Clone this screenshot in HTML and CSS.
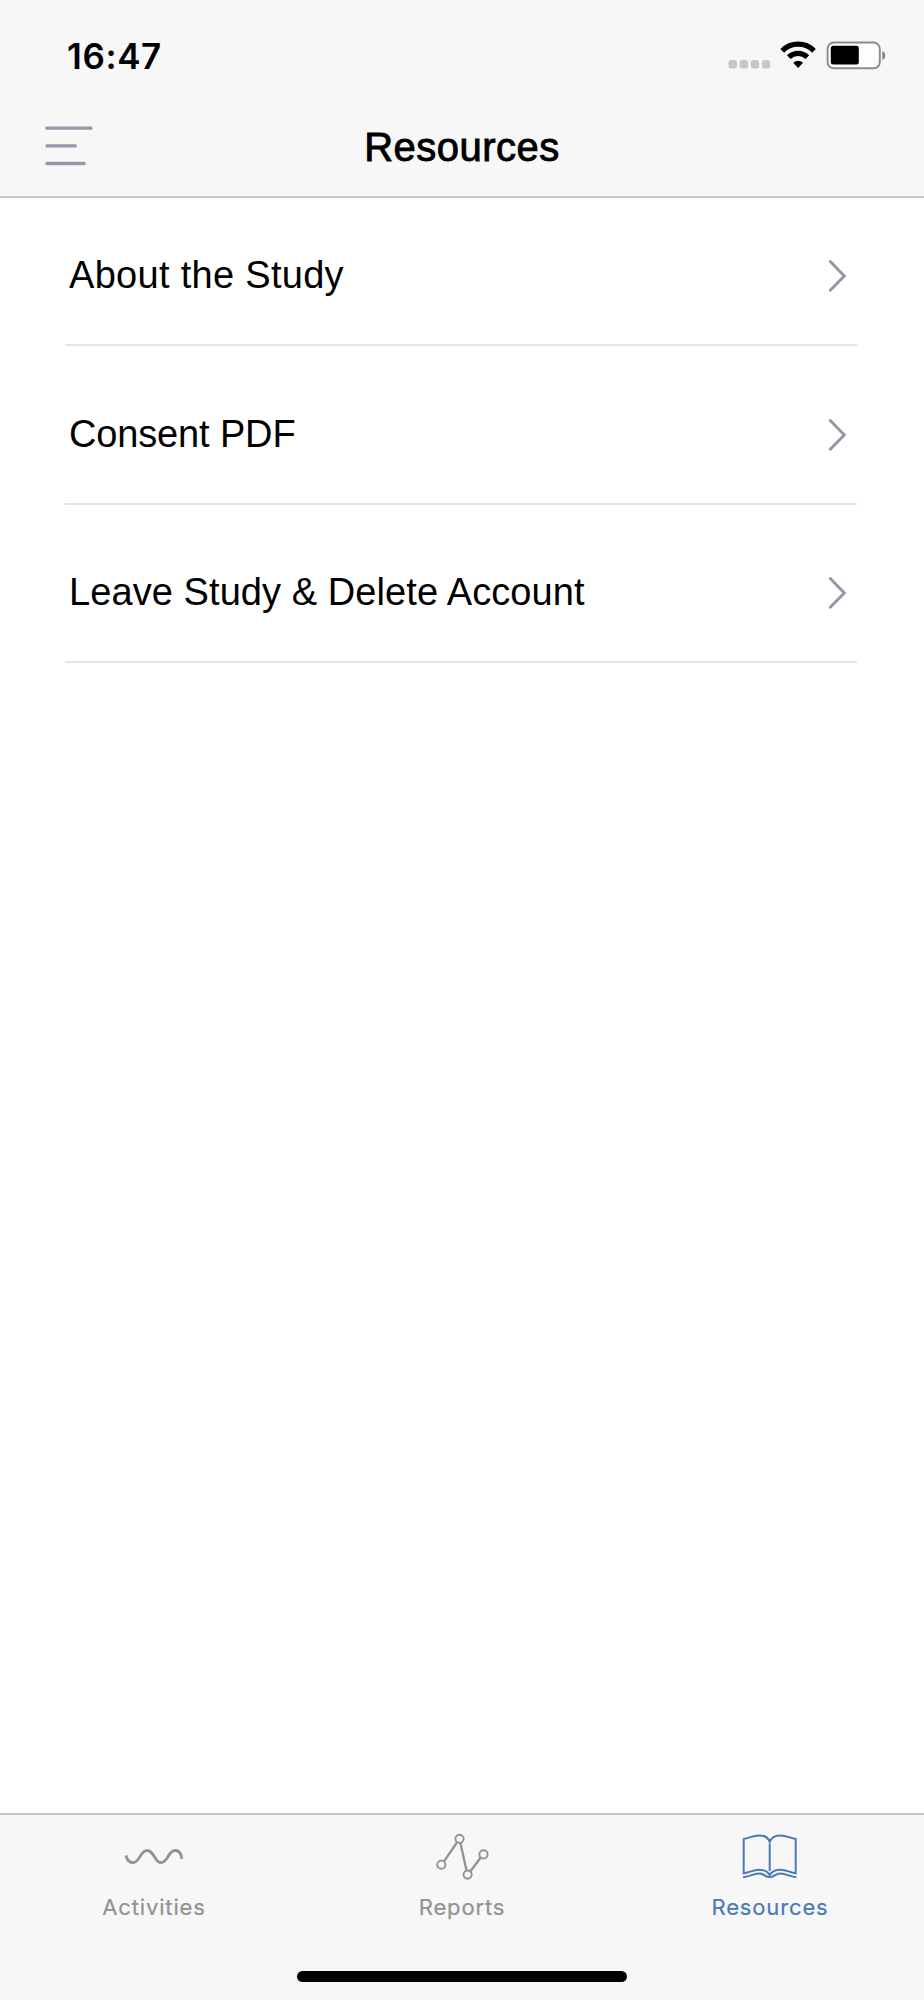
FILE: index.html
```html
<!DOCTYPE html>
<html lang="en">
<head>
<meta charset="utf-8">
<title>Resources</title>
<link rel="stylesheet" href="styles.css">
</head>
<body>
<div class="screen">
  <header class="header">
    <div class="status">
      <span class="time">16:47</span>
      <svg class="status-icons" width="160" height="32" viewBox="0 0 160 32">
        <g fill="#c6c6c6">
          <rect x="0.500" y="20" width="8.5" height="8.5" rx="3"/>
          <rect x="11.6" y="20" width="8.5" height="8.5" rx="3"/>
          <rect x="22.7" y="20" width="8.5" height="8.5" rx="3"/>
          <rect x="33.8" y="20" width="8.5" height="8.5" rx="3"/>
        </g>
        <g fill="none" stroke="#000" stroke-width="5.2">
          <path d="M54.2 10.8a22.5 22.5 0 0 1 31.8 0"/>
          <path d="M60.8 17.2a13.3 13.3 0 0 1 18.6 0"/>
        </g>
        <path d="M65.2 22.7a7 7 0 0 1 9.8 0L70.1 28z"/>
        <rect x="99.6" y="2.5" width="52.2" height="25.8" rx="6.2" fill="#fdfdfd" stroke="#8b8b8b" stroke-width="1.9"/>
        <rect x="102.8" y="5.8" width="28" height="18.8" rx="2.5"/>
        <path d="M154.3 11c4 1.300 4 7.700 0 9z" fill="#858585"/>
      </svg>
    </div>
    <div class="nav">
      <svg class="menu" width="52" height="44" viewBox="0 0 52 44" fill="none" stroke="#9697ad" stroke-width="3.300" stroke-linecap="round">
        <path d="M2.900 4.200H47M2.900 21.900H31.300M2.900 39.500H40.200"/>
      </svg>
      <h1 class="title">Resources</h1>
    </div>
  </header>
  <main class="list">
    <div class="row"><span class="label label-about">About the Study</span><svg class="chevron" width="20" height="34" viewBox="0 0 20 34"><path d="M2.300 2.600L16.300 17L2.300 31.200"/></svg></div>
    <div class="row"><span class="label label-consent">Consent PDF</span><svg class="chevron" width="20" height="34" viewBox="0 0 20 34"><path d="M2.300 2.600L16.300 17L2.300 31.200"/></svg></div>
    <div class="row"><span class="label label-leave">Leave Study &amp; Delete Account</span><svg class="chevron" width="20" height="34" viewBox="0 0 20 34"><path d="M2.300 2.600L16.300 17L2.300 31.200"/></svg></div>
  </main>
  <footer class="footer">
    <nav class="tabs">
      <div class="tab">
        <svg width="60" height="50" viewBox="0.500 0 60 50" fill="none" stroke="#929292" stroke-width="2.800">
          <path d="M2.300 25.500C3.500 29.500 5.500 32.700 9.500 32.700C16.500 32.700 16.500 20.500 23.700 20.500C30.900 20.500 30.900 32.700 37.600 32.700C44.500 32.700 44.500 20.500 51.500 20.500C56 20.500 58 24.500 58.300 28.800"/>
        </svg>
        <span>Activities</span>
      </div>
      <div class="tab">
        <svg width="60" height="50" viewBox="0 0 60 50" fill="none" stroke="#929292">
          <path stroke-width="2.300" d="M12 31.300L25.300 12M28.400 12.700L34.600 40.900M38.300 41.500L48.500 27.700"/>
          <g stroke-width="1.900"><circle cx="9.300" cy="34.700" r="4.100"/><circle cx="27.500" cy="8.800" r="4.100"/><circle cx="35.600" cy="44.600" r="4.100"/><circle cx="51.500" cy="24.400" r="4.100"/></g>
        </svg>
        <span>Reports</span>
      </div>
      <div class="tab active">
        <svg width="60" height="50" viewBox="0.800 0 60 50" fill="none" stroke="#4a7ab8" stroke-width="2">
          <path d="M30.500 12C29 7.500 25 5.400 20 5.400C14 5.400 10 8 4.500 9.100V43.300C10 42.500 14 39.700 20 39.700C25 39.700 28.500 41.500 30.500 45C32.500 41.500 36 39.700 41 39.700C47 39.700 51 42.500 56.500 43.300V9.100C51 8 47 5.400 41 5.400C36 5.400 32 7.500 30.500 12Z"/>
          <path d="M30.500 14V41M3.800 47.300C10 46.800 14 43.600 20 43.600C24.500 43.600 25.500 46.300 28.300 46.700Q30.500 47.100 32.700 46.700C35.500 46.300 36.500 43.600 41 43.600C47 43.600 51 46.800 57.200 47.300"/>
        </svg>
        <span>Resources</span>
      </div>
    </nav>
    <div class="home-bar"></div>
  </footer>
</div>
</body>
</html>
```
FILE: styles.css
```css
* { box-sizing: border-box; }

body {
  margin: 0;
  background: #fff;
  color: #000;
  font-family: "Liberation Sans", Arial, sans-serif;
}

.screen {
  width: 924px;
  height: 2000px;
  display: flex;
  flex-direction: column;
}

.header {
  height: 198px;
  background: #f7f7f7;
  border-bottom: 2px solid #c8c8c8;
}

.status {
  height: 110px;
  display: flex;
  justify-content: space-between;
  align-items: flex-start;
  padding: 35px 36px 0 67px;
}

.time {
  font: 600 35px/42px Inter, sans-serif;
  letter-spacing: 0.6px;
}

.status-icons { margin-top: 5px; }

.nav {
  display: grid;
  grid-template-columns: 150px 1fr 150px;
  align-items: start;
}

.menu { margin: 14px 0 0 44px; }

.title {
  margin: 12px 0 0;
  text-align: center;
  font-size: 40px;
  font-weight: 400;
  line-height: 50px;
  letter-spacing: 0.5px;
  -webkit-text-stroke: 0.9px #000;
}

.list {
  flex: 1;
  padding: 29px 67px 0 65px;
}

.row {
  height: 158.5px;
  padding: 39.5px 10px 19px 4px;
  display: flex;
  justify-content: space-between;
  align-items: center;
  border-bottom: 2px solid #e3e6e7;
}

.row:first-child {
  height: 119px;
  padding-top: 0;
}

.label {
  margin-top: -2px;
  font-size: 38px;
  line-height: 46px;
}

.label-about { letter-spacing: 0.3px; }
.label-consent { letter-spacing: -0.15px; }
.label-leave { letter-spacing: 0.08px; }

.chevron {
  margin-right: -1px;
  fill: none;
  stroke: #9496a5;
  stroke-width: 2.9;
  stroke-linecap: round;
  stroke-linejoin: miter;
}

.footer {
  height: 187px;
  background: #f7f7f7;
  border-top: 2px solid #c4c4c4;
}

.tabs {
  height: 156px;
  display: grid;
  grid-template-columns: repeat(3, 1fr);
}

.tab {
  display: flex;
  flex-direction: column;
  align-items: center;
  padding-top: 15px;
  color: #929292;
  font: 400 22px/28px Inter, sans-serif;
  letter-spacing: 0.85px;
  -webkit-text-stroke: 0.2px currentColor;
}

.tab span { margin-top: 13px; }

.active { color: #4a7ab8; }

.home-bar {
  width: 330px;
  height: 11px;
  margin: 0 auto;
  border-radius: 6px;
  background: #000;
}
```
